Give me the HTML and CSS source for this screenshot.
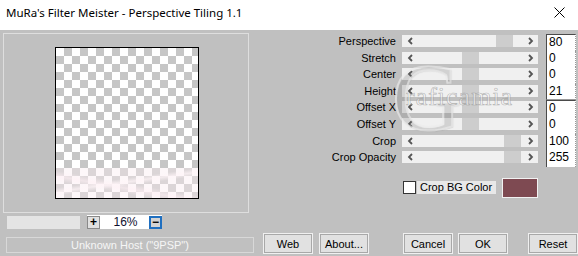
FILE: index.html
```html
<!DOCTYPE html>
<html lang="en">
<head>
    <meta charset="UTF-8">
    <title>MuRa's Filter Meister - Perspective Tiling 1.1</title>
    <link rel="stylesheet" href="styles.css">
</head>
<body>

    <div class="titlebar">
        <span class="title">MuRa's Filter Meister - Perspective Tiling 1.1</span>
        <svg class="close" width="11" height="11" viewBox="0 0 11 11">
            <path d="M0.5 0.5 L10.5 10.5 M10.5 0.5 L0.5 10.5" stroke="#000" stroke-width="1"/>
        </svg>
    </div>

    <div class="dialog">
        <div class="top">
            <div class="left">
                <div class="groupbox">
                    <div class="preview">
                        <div class="streaks"></div>
                    </div>
                </div>
                <div class="zoom-row">
                    <div class="zoom-field"></div>
                    <div class="zoom-box">
                        <span class="zbtn plus">+</span>
                        <span class="zoom-value">16%</span>
                        <span class="zbtn minus">&minus;</span>
                    </div>
                </div>
            </div>

            <div class="right">
                <div class="sliders">
                    <div class="row first">
                        <span class="label">Perspective</span>
                        <div class="track">
                            <svg class="arrow" width="6" height="8" viewBox="0 0 6 8"><path d="M5 1 L2 4 L5 7" /></svg>
                            <b class="thumb" style="left: 94px"></b>
                            <svg class="arrow" width="6" height="8" viewBox="0 0 6 8"><path d="M1 1 L4 4 L1 7" /></svg>
                        </div>
                        <span class="num">80</span>
                    </div>
                    <div class="row">
                        <span class="label">Stretch</span>
                        <div class="track">
                            <svg class="arrow" width="6" height="8" viewBox="0 0 6 8"><path d="M5 1 L2 4 L5 7" /></svg>
                            <b class="thumb" style="left: 60px"></b>
                            <svg class="arrow" width="6" height="8" viewBox="0 0 6 8"><path d="M1 1 L4 4 L1 7" /></svg>
                        </div>
                        <span class="num">0</span>
                    </div>
                    <div class="row">
                        <span class="label">Center</span>
                        <div class="track">
                            <svg class="arrow" width="6" height="8" viewBox="0 0 6 8"><path d="M5 1 L2 4 L5 7" /></svg>
                            <b class="thumb" style="left: 60px"></b>
                            <svg class="arrow" width="6" height="8" viewBox="0 0 6 8"><path d="M1 1 L4 4 L1 7" /></svg>
                        </div>
                        <span class="num">0</span>
                    </div>
                    <div class="row last">
                        <span class="label">Height</span>
                        <div class="track">
                            <svg class="arrow" width="6" height="8" viewBox="0 0 6 8"><path d="M5 1 L2 4 L5 7" /></svg>
                            <b class="thumb" style="left: 60px"></b>
                            <svg class="arrow" width="6" height="8" viewBox="0 0 6 8"><path d="M1 1 L4 4 L1 7" /></svg>
                        </div>
                        <span class="num">21</span>
                    </div>
                    <div class="row first">
                        <span class="label">Offset X</span>
                        <div class="track">
                            <svg class="arrow" width="6" height="8" viewBox="0 0 6 8"><path d="M5 1 L2 4 L5 7" /></svg>
                            <b class="thumb" style="left: 60px"></b>
                            <svg class="arrow" width="6" height="8" viewBox="0 0 6 8"><path d="M1 1 L4 4 L1 7" /></svg>
                        </div>
                        <span class="num">0</span>
                    </div>
                    <div class="row">
                        <span class="label">Offset Y</span>
                        <div class="track">
                            <svg class="arrow" width="6" height="8" viewBox="0 0 6 8"><path d="M5 1 L2 4 L5 7" /></svg>
                            <b class="thumb" style="left: 60px"></b>
                            <svg class="arrow" width="6" height="8" viewBox="0 0 6 8"><path d="M1 1 L4 4 L1 7" /></svg>
                        </div>
                        <span class="num">0</span>
                    </div>
                    <div class="row">
                        <span class="label">Crop</span>
                        <div class="track">
                            <svg class="arrow" width="6" height="8" viewBox="0 0 6 8"><path d="M5 1 L2 4 L5 7" /></svg>
                            <b class="thumb" style="left: 102px"></b>
                            <svg class="arrow" width="6" height="8" viewBox="0 0 6 8"><path d="M1 1 L4 4 L1 7" /></svg>
                        </div>
                        <span class="num">100</span>
                    </div>
                    <div class="row">
                        <span class="label">Crop Opacity</span>
                        <div class="track">
                            <svg class="arrow" width="6" height="8" viewBox="0 0 6 8"><path d="M5 1 L2 4 L5 7" /></svg>
                            <b class="thumb" style="left: 102px"></b>
                            <svg class="arrow" width="6" height="8" viewBox="0 0 6 8"><path d="M1 1 L4 4 L1 7" /></svg>
                        </div>
                        <span class="num">255</span>
                    </div>
                </div>

                <div class="bg-row">
                    <span class="checkbox"></span>
                    <span class="check-label">Crop BG Color</span>
                    <span class="swatch"></span>
                </div>
            </div>
        </div>

        <div class="bottom">
            <div class="status">Unknown Host ("9PSP")</div>
            <button class="btn">Web</button>
            <button class="btn about">About...</button>
            <button class="btn cancel">Cancel</button>
            <button class="btn ok">OK</button>
            <button class="btn reset">Reset</button>
        </div>
    </div>

    <div class="watermark">
        <span class="wm-g">G</span>
        <span class="wm-text">raficamia</span>
    </div>

</body>
</html>
```

FILE: styles.css
```css
body {
    margin: 0;
    width: 578px;
    height: 256px;
    overflow: hidden;
    position: relative;
    background-color: #c0c0c0;
    font-family: "Liberation Sans", Arial, sans-serif;
    font-size: 11px;
    color: #000;
}

.titlebar {
    height: 30px;
    background-color: #fff;
    display: flex;
    align-items: center;
    justify-content: space-between;
    padding: 0 13px 5px 6px;
    box-sizing: border-box;
}

.title {
    font-family: "Noto Sans", sans-serif;
    font-size: 11.5px;
}

.close {
    display: block;
}

.top {
    display: flex;
    height: 203px;
}

.left {
    width: 255px;
    padding: 3px 0 0 3px;
    box-sizing: border-box;
}

.groupbox {
    width: 246px;
    height: 180px;
    border: 1px solid #dedede;
    box-sizing: border-box;
    padding: 13px 0 0 51px;
}

.preview {
    width: 144px;
    height: 152px;
    border: 1px solid #000;
    box-sizing: border-box;
    position: relative;
    background-color: #fff;
    background-image:
        linear-gradient(45deg, #c6c6c6 25%, transparent 25%, transparent 75%, #c6c6c6 75%),
        linear-gradient(45deg, #c6c6c6 25%, transparent 25%, transparent 75%, #c6c6c6 75%);
    background-size: 16px 16px;
    background-position: 0 0, 8px 8px;
}

.streaks {
    position: absolute;
    left: 0;
    right: 0;
    bottom: 0;
    height: 30px;
    background:
        linear-gradient(172deg, transparent 40%, rgba(255, 245, 248, 0.7) 48%, transparent 56%),
        linear-gradient(190deg, transparent 50%, rgba(255, 240, 245, 0.6) 60%, transparent 70%),
        rgba(250, 235, 240, 0.4);
}

.zoom-row {
    display: flex;
    align-items: center;
    margin-top: 2px;
}

.zoom-field {
    width: 73px;
    height: 13px;
    margin-left: 4px;
    background-color: #e4e4e4;
}

.zoom-box {
    width: 75px;
    height: 14px;
    margin-left: 7px;
    background-color: #fff;
    display: flex;
    align-items: center;
}

.zbtn {
    width: 13px;
    height: 13px;
    box-sizing: border-box;
    display: flex;
    align-items: center;
    justify-content: center;
    font-weight: bold;
    font-size: 12px;
    line-height: 1;
}

.plus {
    border: 1px solid #8a8a8a;
    background-color: #e1e1e1;
}

.minus {
    border: 2px solid #1f6fc0;
    background-color: #d4d4d4;
}

.zoom-value {
    flex: 1;
    text-align: center;
    font-size: 12px;
    color: #101030;
    padding-left: 2px;
}

.right {
    width: 250px;
    margin-left: 71px;
    padding-top: 4px;
}

.row {
    display: flex;
    height: 16.6px;
}

.label {
    width: 70px;
    margin-right: 6px;
    text-align: right;
    line-height: 14px;
}

.track {
    width: 136px;
    height: 12px;
    margin-top: 1px;
    background-color: #f0f0f0;
    position: relative;
    display: flex;
    justify-content: space-between;
    align-items: center;
    padding: 0 4px 0 5px;
    box-sizing: border-box;
}

.arrow {
    display: block;
    fill: none;
    stroke: #555;
    stroke-width: 1.8;
}

.thumb {
    position: absolute;
    top: 0;
    width: 17px;
    height: 12px;
    background-color: #cdcdcd;
}

.num {
    width: 30px;
    margin-left: 8px;
    background-color: #fff;
    border-left: 1px solid #4a4a4a;
    border-right: 1px dotted #9a9a9a;
    box-sizing: border-box;
    padding-left: 2px;
    font-size: 12px;
    line-height: 15px;
}

.row.first .num {
    border-top: 1px solid #4a4a4a;
    line-height: 14px;
}

.row.last .num {
    border-bottom: 1px solid #9a9a9a;
}

.bg-row {
    display: flex;
    align-items: center;
    margin-top: 11px;
    margin-left: 77px;
}

.checkbox {
    width: 13px;
    height: 13px;
    box-sizing: border-box;
    border: 1px solid #333;
    background-color: #fff;
}

.check-label {
    width: 79px;
    height: 13px;
    margin-left: 1px;
    background-color: #e8e8e8;
    line-height: 13px;
    padding-left: 3px;
    box-sizing: border-box;
}

.swatch {
    width: 36px;
    height: 20px;
    margin-left: 6px;
    box-sizing: border-box;
    border: 1px solid #f2f2f2;
    background-color: #7e4a52;
}

.bottom {
    display: flex;
    align-items: flex-start;
    height: 21px;
}

.status {
    width: 248px;
    height: 16px;
    margin: 4px 0 0 6px;
    box-sizing: border-box;
    border: 1px solid #d8d8d8;
    color: #f6f6f6;
    text-align: center;
    line-height: 14px;
    font-size: 11px;
}

.btn {
    width: 50px;
    height: 21px;
    margin-left: 9px;
    padding: 0;
    font-family: "Liberation Sans", Arial, sans-serif;
    font-size: 11px;
    color: #000;
    background-color: #e1e1e1;
    border: 1px solid #f0f0f0;
    box-shadow: inset 0 0 0 1px #a8a8a8;
}

.about {
    margin-left: 6px;
}

.cancel {
    margin-left: 34px;
}

.ok {
    margin-left: 5px;
}

.reset {
    margin-left: 20px;
}

.watermark {
    position: absolute;
    left: 392px;
    top: 50px;
    width: 180px;
    height: 100px;
    pointer-events: none;
}

.wm-g {
    position: absolute;
    left: 0;
    top: 0;
    font-family: "Liberation Serif", serif;
    font-size: 96px;
    line-height: 96px;
    color: transparent;
    -webkit-text-stroke: 2px rgba(235, 235, 235, 0.65);
    text-shadow: 1px 1px 1px rgba(120, 120, 120, 0.25);
}

.wm-text {
    position: absolute;
    left: 14px;
    top: 32px;
    font-family: "Liberation Serif", serif;
    font-size: 26px;
    letter-spacing: 1px;
    color: rgba(250, 250, 250, 0.55);
    -webkit-text-stroke: 0.7px rgba(110, 110, 110, 0.45);
}
```
